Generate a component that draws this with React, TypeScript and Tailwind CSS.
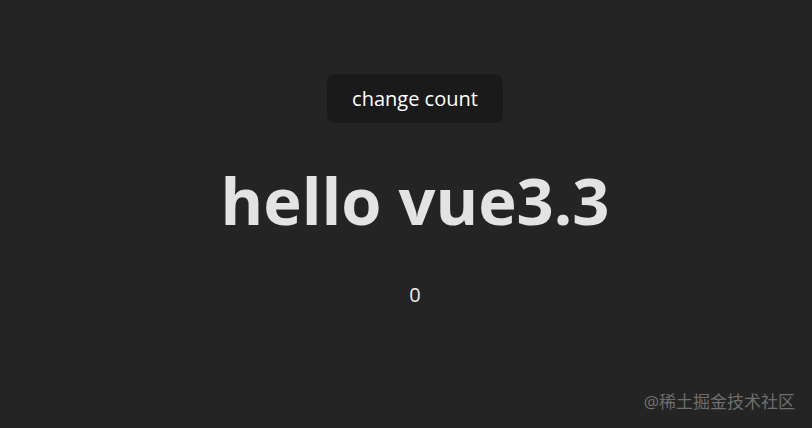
import { useState } from "react";

export default function App() {
  const [count, setCount] = useState(0);
  return (
    <div
      className="relative w-full h-[428px] bg-[#242424] text-[rgba(255,255,255,0.87)] overflow-hidden"
      style={{ fontFamily: '"Open Sans", "Noto Sans", sans-serif' }}
    >
      <div className="flex flex-col items-center pt-[74px] pl-[18px]">
        <button
          className="h-[49px] px-[25px] rounded-lg bg-[#1a1a1a] text-white text-[20px] leading-[30px] cursor-pointer"
          onClick={() => setCount(count + 1)}
        >
          change count
        </button>
        <h1 className="mt-[42px] text-[65px] leading-[1.1] font-bold text-[#e3e3e3]">
          hello vue3.3
        </h1>
        <p className="mt-[43px] text-[20px] leading-[30px] text-[#ededed]">{count}</p>
      </div>
      <div
        className="absolute right-[17px] bottom-[14px] text-[17px] text-[#6e6e6e]"
        style={{ fontFamily: '"Noto Sans", "Noto Sans CJK SC", sans-serif' }}
      >
        @稀土掘金技术社区
      </div>
    </div>
  );
}
